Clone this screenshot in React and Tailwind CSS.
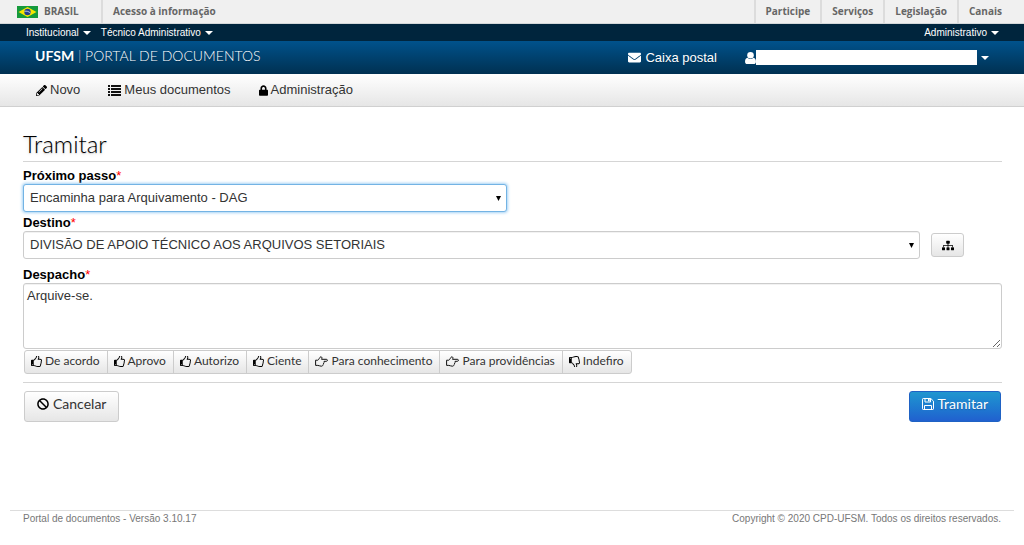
import React from "react";
import {
  FaBan,
  FaEnvelope,
  FaLock,
  FaPencilAlt,
  FaSitemap,
} from "react-icons/fa";

const Caret = () => (
  <svg viewBox="0 0 8 4" className="w-2 h-1 fill-current" aria-hidden="true">
    <path d="M0 0h8L4 4z" />
  </svg>
);

const BrazilFlag = () => (
  <svg viewBox="0 0 21 12" className="w-[21px] h-3" aria-hidden="true">
    <path fill="#159a3c" d="M0 0h21v12H0z" />
    <path fill="#f6e500" d="M10.500 1 19.500 6l-9 5-9-5z" />
    <circle cx="10.500" cy="6" r="3.200" fill="#23408f" />
    <path d="M7.500 5.300c2-.4 4.300.1 5.900 1.700" fill="none" stroke="#fff" strokeWidth=".7" />
  </svg>
);

const thumbPath =
  "M384 1344q0-26-19-45t-45-19-45 19-19 45 19 45 45 19 45-19 19-45zm1152-576q0-51-39-89.500t-89-38.500h-352q0-58 48-159.500t48-160.500q0-98-32-145t-128-47q-26 26-38 85t-30.500 125.500-59.500 109.500q-22 23-77 91-4 5-23 30t-31.500 41-34.500 42.500-40 44-38.500 35.500-40 27-35.500 9h-32v640h32q13 0 31.500 3t33 6.500 38 11 35 11.500 35.500 12.500 29 10.500q211 73 342 73h121q192 0 192-167 0-26-5-56 30-16 47.500-52.500t17.500-73.500-18-69q53-50 53-119 0-25-10-55.500t-25-47.500q32-1 53.500-47t21.500-81zm128-1q0 89-49 163 9 33 9 69 0 77-38 144 3 21 3 43 0 101-60 178 1 139-85 219.500t-227 80.500h-129q-96 0-189.500-22.500t-216.500-65.500q-116-40-138-40h-288q-53 0-90.500-37.500t-37.500-90.500v-640q0-53 37.500-90.500t90.500-37.500h274q36-24 137-155 58-75 107-128 24-25 35.500-85.500t30.500-126.500 62-108q39-37 90-37 84 0 151 32.500t102 101.500 35 186q0 93-48 192h176q104 0 180 76t76 179z";

const ThumbUp = () => (
  <svg viewBox="128 128 1536 1536" className="size-[11px] fill-black" aria-hidden="true">
    <path d={thumbPath} />
  </svg>
);

const ThumbDown = () => (
  <svg viewBox="128 128 1536 1536" className="size-[11px] fill-black" aria-hidden="true">
    <path d={thumbPath} transform="matrix(1 0 0 -1 0 1792)" />
  </svg>
);

const HandRight = () => (
  <svg viewBox="0 0 13 11" className="h-[11px] w-[13px]" fill="none" stroke="#111" strokeLinejoin="round" aria-hidden="true">
    <path d="M.6 4.200h2.200C4.200 3.600 4.500 1 5.800.8c1.300 0 1.400 1.300.7 2.500h4.800c1.500 0 1.500 2 0 2H9c.4.900.1 1.500-.4 1.800.2.800-.1 1.300-.6 1.500 0 1-.7 1.600-1.700 1.600-1.600 0-2.100-.8-3.500-.8H.6z" />
  </svg>
);

const ListIcon = () => (
  <svg viewBox="0 0 13 11" className="h-[11px] w-[13px] fill-[#111]" aria-hidden="true">
    <path d="M0 0h2v2H0zM3 0h10v2H3zM0 3h2v2H0zM3 3h10v2H3zM0 6h2v2H0zM3 6h10v2H3zM0 9h2v2H0zM3 9h10v2H3z" />
  </svg>
);

const UserIcon = () => (
  <svg viewBox="0 0 10 11" className="h-3 w-[11px] fill-current" aria-hidden="true">
    <circle cx="5" cy="3" r="3" />
    <path d="M2.300 5.200C3 6 4 6.500 5 6.500s2-.5 2.700-1.300C9.300 5.300 10 7 10 8.900 10 10.200 9.200 11 8 11H2C.8 11 0 10.200 0 8.900 0 7 .7 5.300 2.300 5.200z" />
  </svg>
);

const SaveIcon = () => (
  <svg viewBox="0 0 12 12" className="size-3" fill="none" stroke="currentColor" aria-hidden="true">
    <path d="M.5 1.200c0-.4.300-.7.700-.7h7.600l2.700 2.700v7.600c0 .4-.3.700-.7.700H1.200c-.4 0-.7-.3-.7-.7z" />
    <path d="M3 .5v3.500h5.500V.5M2.500 11.500v-4h7v4" />
    <path fill="currentColor" stroke="none" d="M6 1h1.700v2.300H6z" />
  </svg>
);

const GovBar = () => (
  <div className="flex h-6 items-stretch border-b border-[#d4d8da] bg-[#f0f0f0] font-['Open_Sans',sans-serif] text-[10px] font-bold text-[#666]">
    <a href="#brasil" className="flex w-[103px] items-center gap-1.5 border-r-2 border-[#dcdcdc] pl-[17px]">
      <BrazilFlag />
      BRASIL
    </a>
    <a href="#acesso" className="flex items-center pl-2.5">Acesso à informação</a>
    <nav className="ml-auto flex">
      {["Participe", "Serviços", "Legislação", "Canais"].map((item) => (
        <a key={item} href="#gov" className="flex items-center border-l-2 border-[#dcdcdc] px-2.5 last:pr-[22px]">
          {item}
        </a>
      ))}
    </nav>
  </div>
);

const Header = () => (
  <header className="text-white">
    <div className="flex h-[17px] items-center gap-2.5 bg-[#00253d] pr-[25px] pl-[26px] text-[10px]">
      <button type="button" className="flex items-center gap-1">Institucional <Caret /></button>
      <button type="button" className="flex items-center gap-1">Técnico Administrativo <Caret /></button>
      <button type="button" className="ml-auto flex items-center gap-1">Administrativo <Caret /></button>
    </div>
    <div className="flex h-[33px] items-center bg-linear-to-b from-[#00528c] to-[#003152] pr-[35px] pl-[35px] text-[13px] text-shadow-xs">
      <a href="#inicio" className="pb-1 font-['Lato',sans-serif] text-sm font-light">
        <b className="font-bold">UFSM</b> <span className="text-[#d9b9c0]">|</span> PORTAL DE DOCUMENTOS
      </a>
      <a href="#caixa" className="ml-auto flex items-center gap-1">
        <FaEnvelope className="h-[13px] w-[13px]" />
        Caixa postal
      </a>
      <button type="button" aria-label="Usuário" className="ml-7 flex items-center">
        <UserIcon />
        <span className="mr-1 h-[15px] w-[221px] bg-white" />
        <Caret />
      </button>
    </div>
  </header>
);

const MainNav = () => (
  <nav className="flex h-[33px] items-center gap-7 border-b border-[#d0d0d0] bg-linear-to-b from-white to-[#e6e6e6] pl-9 text-[13px] text-[#333]">
    <a href="#novo" className="flex items-center gap-[3px]"><FaPencilAlt className="size-[11px] text-black" />Novo</a>
    <a href="#documentos" className="flex items-center gap-[3px]"><ListIcon />Meus documentos</a>
    <a href="#administracao" className="flex items-center gap-[3px]"><FaLock className="h-[11px] w-[9px] text-black" />Administração</a>
  </nav>
);

const Label = ({ htmlFor, children }) => (
  <label htmlFor={htmlFor} className="block h-4 text-[13px] leading-4 font-bold text-black">
    {children}
    <span className="font-normal text-[#f00]">*</span>
  </label>
);

const Select = ({ id, option, className, wrapper }) => (
  <div className={`relative ${wrapper}`}>
    <select
      id={id}
      className={`h-7 w-full appearance-none rounded-[3px] border bg-white px-1.5 text-[13px] text-[#333] outline-none ${className}`}
    >
      <option>{option}</option>
    </select>
    <svg viewBox="0 0 5 5" className="pointer-events-none absolute top-3 right-1.5 size-[5px]" aria-hidden="true">
      <path d="M0 0h5L2.500 5z" />
    </svg>
  </div>
);

const quickReplies = [
  { text: "De acordo", Icon: ThumbUp },
  { text: "Aprovo", Icon: ThumbUp },
  { text: "Autorizo", Icon: ThumbUp },
  { text: "Ciente", Icon: ThumbUp },
  { text: "Para conhecimento", Icon: HandRight },
  { text: "Para providências", Icon: HandRight },
  { text: "Indefiro", Icon: ThumbDown },
];

const TramitarForm = () => (
  <form className="pt-[23px] pr-[22px] pl-[23px]">
    <h1 className="h-8 border-b border-[#d5d5d5] font-['Lato',sans-serif] text-2xl leading-7 font-light text-black text-shadow-md">
      Tramitar
    </h1>

    <div className="pt-1.5">
      <Label htmlFor="passo">Próximo passo</Label>
      <Select
        id="passo"
        option="Encaminha para Arquivamento - DAG"
        wrapper="w-1/2 max-w-[484px]"
        className="border-[#73b3e4] shadow-[0_0_3px_1px_#a5d2f5]"
      />
    </div>

    <div className="pt-[3px]">
      <Label htmlFor="destino">Destino</Label>
      <div className="flex items-center gap-[11px]">
        <Select
          id="destino"
          option="DIVISÃO DE APOIO TÉCNICO AOS ARQUIVOS SETORIAIS"
          wrapper="flex-1"
          className="border-[#ccc] inset-shadow-2xs"
        />
        <button
          type="button"
          aria-label="Organograma"
          className="mr-[38px] flex h-6 w-[33px] items-center justify-center rounded-[3px] border border-[#ccc] bg-linear-to-b from-white to-[#e6e6e6] text-black"
        >
          <FaSitemap className="h-[11px] w-3" />
        </button>
      </div>
    </div>

    <div className="pt-2">
      <Label htmlFor="despacho">Despacho</Label>
      <textarea
        id="despacho"
        defaultValue="Arquive-se."
        className="block h-[66px] w-full rounded-[3px] border border-[#ccc] px-[3px] py-1 text-[13px] leading-4 text-[#333] inset-shadow-2xs outline-none"
      />
    </div>

    <div className="mx-px mt-px flex font-['Lato',sans-serif] text-xs text-[#333]">
      {quickReplies.map(({ text, Icon }) => (
        <button
          key={text}
          type="button"
          className="-mr-px flex h-6 items-center gap-[3px] border border-[#ccc] bg-linear-to-b from-white to-[#e6e6e6] pr-[7px] pb-0.5 pl-1.5 whitespace-nowrap first:rounded-l-[3px] last:rounded-r-[3px]"
        >
          <Icon />
          {text}
        </button>
      ))}
    </div>

    <div className="mt-2 flex justify-between border-t border-[#d5d5d5] px-px pt-2 font-['Lato',sans-serif] text-sm">
      <button
        type="button"
        className="flex h-[31px] items-center gap-1 rounded-[3px] border border-[#ccc] bg-linear-to-b from-white to-[#e6e6e6] px-3 pb-1.5 text-[#333]"
      >
        <FaBan className="size-3 text-black" />
        Cancelar
      </button>
      <button
        type="submit"
        className="flex h-[31px] items-center gap-[3px] rounded-[3px] border border-[#1f62c4] bg-linear-to-b from-[#2196cf] to-[#2160cf] px-3 pb-1.5 text-white text-shadow-xs"
      >
        <SaveIcon />
        Tramitar
      </button>
    </div>
  </form>
);

const Footer = () => (
  <footer className="mx-2.5 mt-auto flex h-[35px] justify-between border-t border-[#ddd] px-[13px] pt-px text-[10px] leading-[14px] text-[#777]">
    <p>Portal de documentos - Versão 3.10.17</p>
    <p>Copyright © 2020 CPD-UFSM. Todos os direitos reservados.</p>
  </footer>
);

const App = () => (
  <div className="flex min-h-screen flex-col bg-white font-['Liberation_Sans',Arial,sans-serif]">
    <GovBar />
    <Header />
    <MainNav />
    <main>
      <TramitarForm />
    </main>
    <Footer />
  </div>
);

export default App;
